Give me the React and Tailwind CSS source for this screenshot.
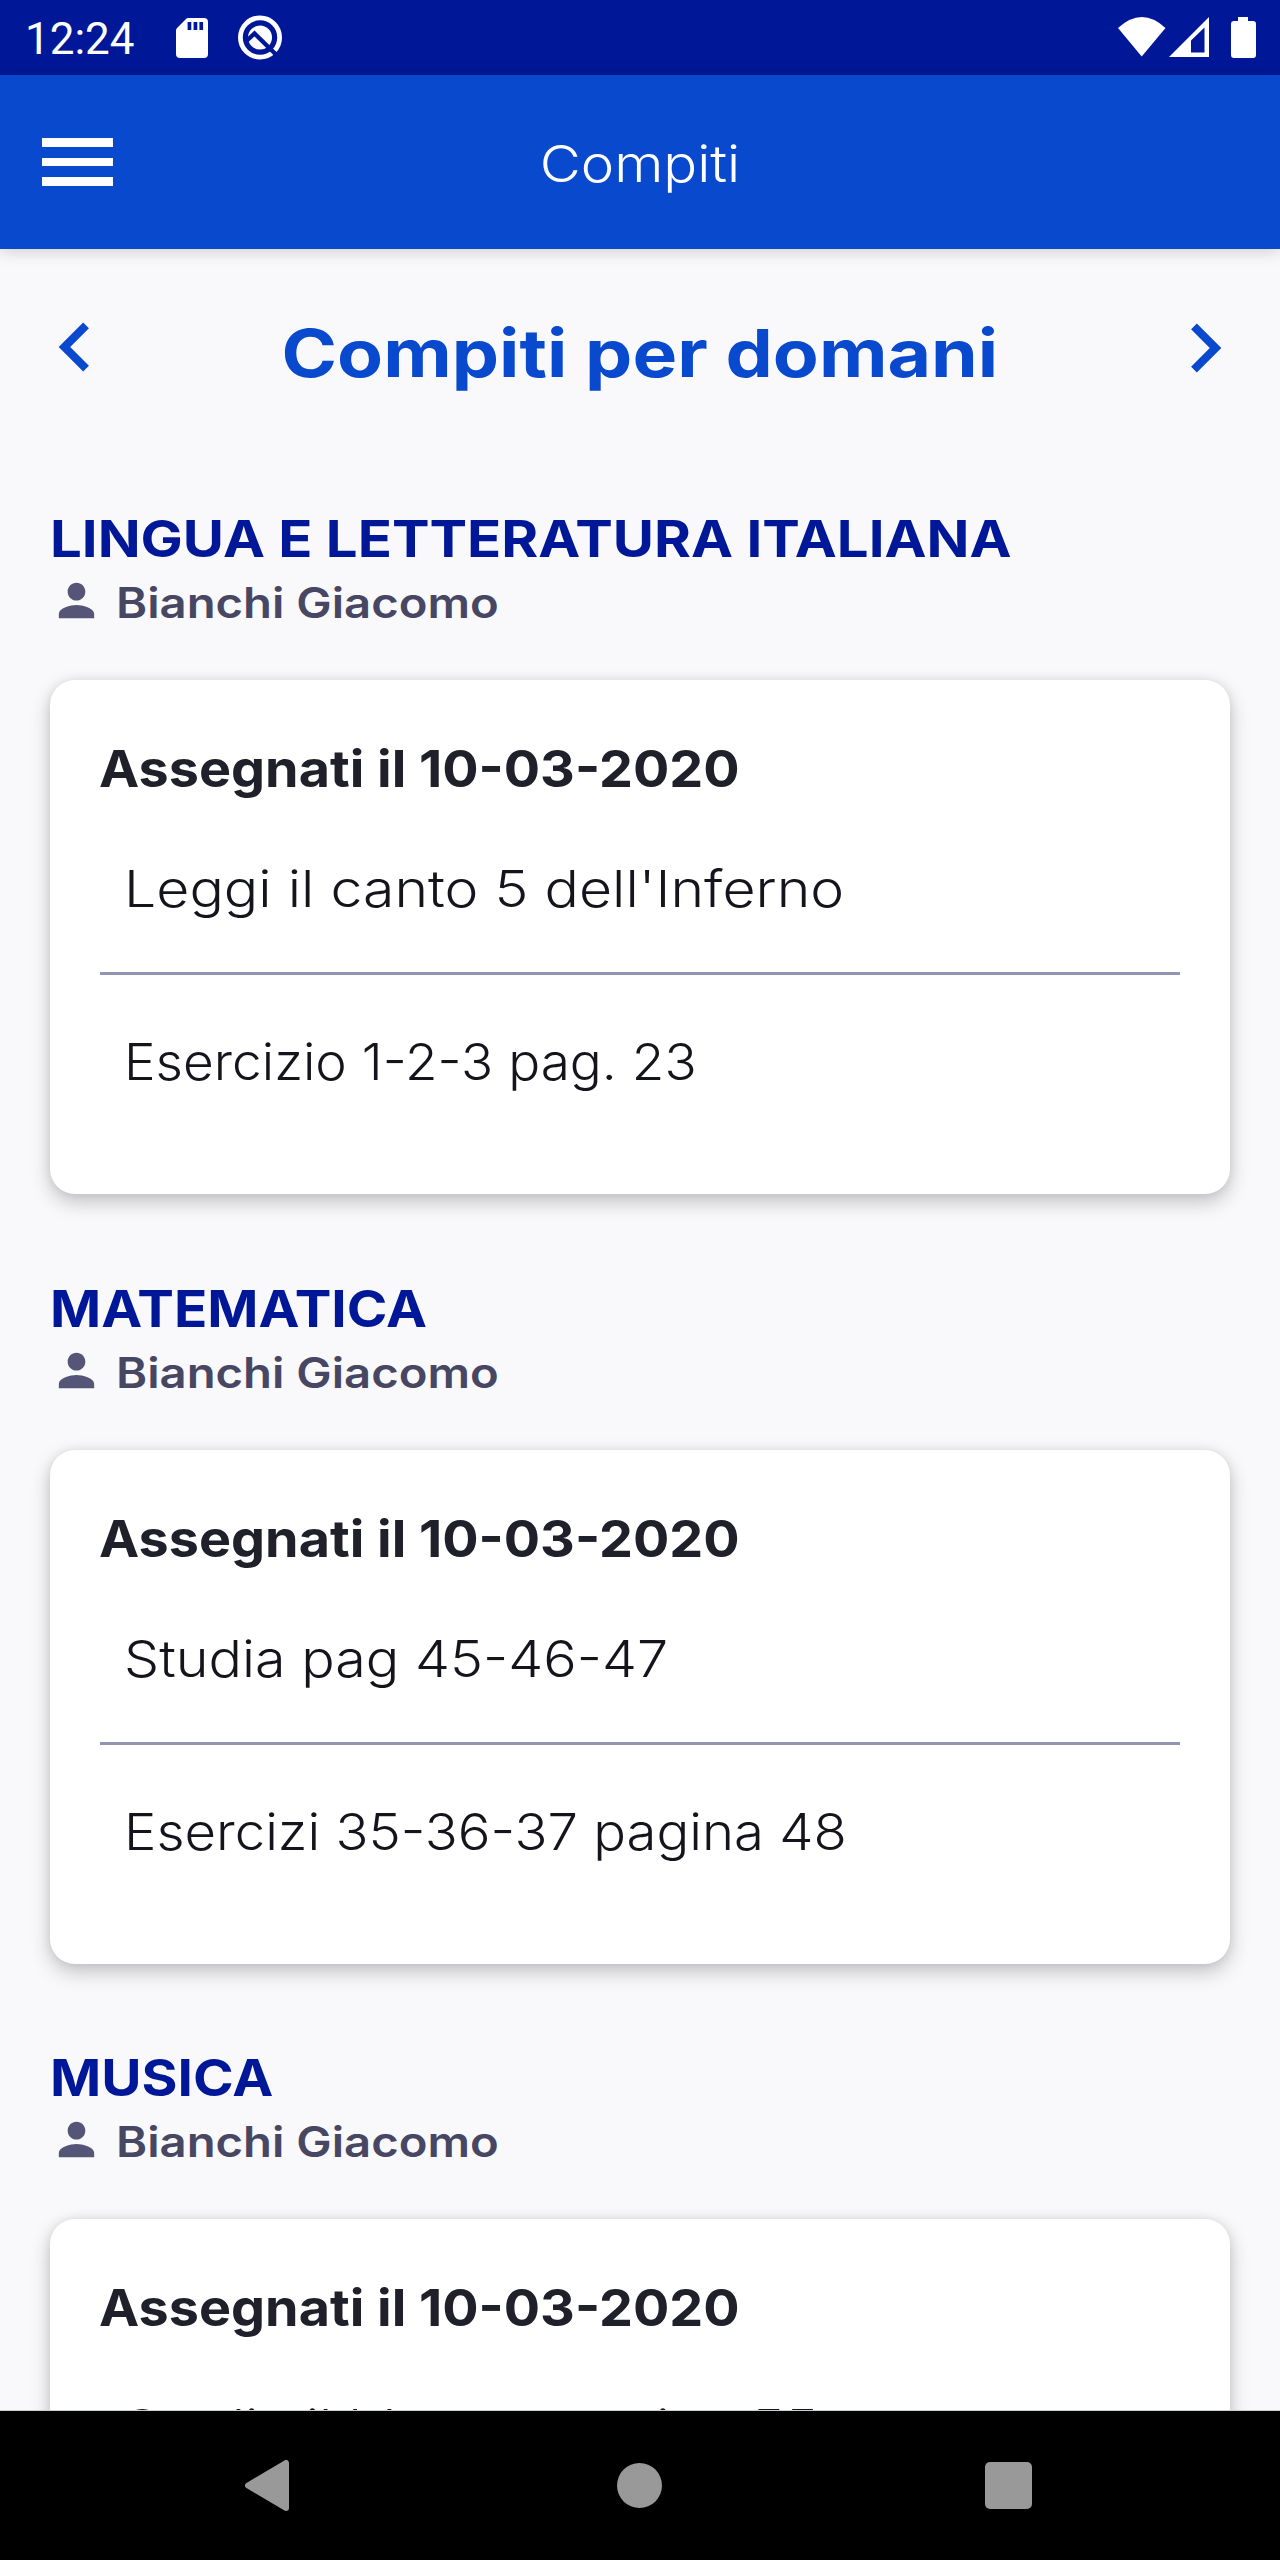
import React from 'react';
import { MdChevronLeft, MdChevronRight, MdPerson } from 'react-icons/md';

const subjects = [
  {
    name: 'LINGUA E LETTERATURA ITALIANA',
    nameClass: 'scale-x-[1.115]',
    teacher: 'Bianchi Giacomo',
    assigned: '10-03-2020',
    tasks: [
      { text: "Leggi il canto 5 dell'Inferno", className: 'scale-x-[1.132]' },
      { text: 'Esercizio 1-2-3 pag. 23', className: 'scale-x-[1.052]' },
    ],
  },
  {
    name: 'MATEMATICA',
    nameClass: 'scale-x-[1.088]',
    teacher: 'Bianchi Giacomo',
    assigned: '10-03-2020',
    tasks: [
      { text: 'Studia pag 45-46-47', className: 'scale-x-[1.102]' },
      { text: 'Esercizi 35-36-37 pagina 48', className: 'scale-x-[1.078]' },
    ],
  },
  {
    name: 'MUSICA',
    nameClass: 'scale-x-[1.09]',
    teacher: 'Bianchi Giacomo',
    assigned: '10-03-2020',
    tasks: [
      { text: 'Studia il blues a pagina 55', className: 'scale-x-[1.13]' },
    ],
  },
];

const StatusBar = () => (
  <div className="h-[75px] shrink-0 bg-[#001797] text-white flex items-start justify-between pl-[25px] pr-[24px]">
    <div className="flex items-start">
      <span className="w-[151px] mt-[14px] font-['Roboto',sans-serif] text-[44px] leading-[50px]">12:24</span>
      <svg className="mt-[18px]" width="32" height="40" viewBox="0 0 32 40">
        <path
          fill="currentColor"
          fillRule="evenodd"
          d="M11 0H28a4 4 0 0 1 4 4V36a4 4 0 0 1-4 4H4a4 4 0 0 1-4-4V12.5Q0 11 1 10L10 1Q11 0 12 0ZM11.6 4v8h3.7V4ZM17.6 4v8h3.7V4ZM23.4 4v8h3.7V4Z"
        />
      </svg>
      <svg className="mt-[15px] ml-[30px]" width="44" height="45" viewBox="-22 -22.5 44 45">
        <circle r="19.6" fill="none" stroke="currentColor" strokeWidth="4.8" />
        <circle r="12" fill="currentColor" />
        <path d="M-13 3L-5.5 -4L18 19" fill="none" stroke="#001797" strokeWidth="4.4" />
      </svg>
    </div>
    <div className="flex items-start pt-[17px]">
      <svg width="48" height="40" viewBox="0 0 48 40">
        <path fill="currentColor" d="M0 11Q24 -11 47.5 11L23.7 39.5Z" />
      </svg>
      <svg className="ml-[3px]" width="40" height="40" viewBox="0 0 40 40">
        <path fill="currentColor" fillRule="evenodd" d="M0 40L40 0V40ZM22 35.5H35.5V10.5L22 23.5Z" />
      </svg>
      <svg className="ml-[22px]" width="25" height="41" viewBox="0 0 25 41">
        <path fill="currentColor" d="M7 0H17V4H22a3 3 0 0 1 3 3V38a3 3 0 0 1-3 3H3a3 3 0 0 1-3-3V7a3 3 0 0 1 3-3H7Z" />
      </svg>
    </div>
  </div>
);

const Header = () => (
  <header className="relative z-10 h-[174px] shrink-0 bg-[#0849cd] text-white grid grid-cols-[71px_1fr_71px] items-center px-[42px] shadow-[0_2px_16px_rgba(0,0,0,0.18)]">
    <button className="flex flex-col gap-[11px]">
      <span className="h-[8.5px] bg-white" />
      <span className="h-[8.5px] bg-white" />
      <span className="h-[8.5px] bg-white" />
    </button>
    <h1 className="pt-[3px] text-center text-[50.5px] leading-[64px] font-light scale-x-[1.115]">Compiti</h1>
  </header>
);

const DayPicker = () => (
  <div className="flex items-start justify-between px-[26px] pt-[49px] text-[#0849cd]">
    <MdChevronLeft size={98} />
    <h2 className="mt-[15px] text-[66px] leading-[80px] font-bold scale-x-[1.138]">Compiti per domani</h2>
    <MdChevronRight size={98} className="mt-px" />
  </div>
);

const SubjectSection = ({ subject }) => (
  <section className="mb-[82.5px] whitespace-nowrap">
    <h3 className={`w-fit origin-left text-[50.5px] leading-[64px] font-bold text-[#001797] ${subject.nameClass}`}>
      {subject.name}
    </h3>
    <div className="mt-[6px] flex items-start h-[52px]">
      <MdPerson size={53} className="-mt-[3px] text-[#555577]" />
      <span className="ml-[13px] origin-left text-[42px] leading-[52px] font-semibold text-[#474763] scale-x-[1.125]">
        {subject.teacher}
      </span>
    </div>
    <div className="mt-[51px] h-[514px] rounded-[25px] bg-white px-[50px] pt-[57px] shadow-[0_8px_20px_rgba(0,0,0,0.22),0_0_10px_rgba(0,0,0,0.08)]">
      <h4 className="mb-[56px] -ml-px w-fit origin-left text-[50.5px] leading-[64px] font-bold text-[#20202a] scale-x-[1.067]">
        Assegnati il {subject.assigned}
      </h4>
      {subject.tasks.map((task, index) => (
        <div
          key={task.text}
          className={index > 0 ? 'mt-[51px] border-t-[3px] border-[#9393b4] pt-[55px]' : ''}
        >
          <p className={`ml-[24px] w-fit origin-left text-[50.5px] leading-[64px] font-light text-[#14141c] ${task.className}`}>
            {task.text}
          </p>
        </div>
      ))}
    </div>
  </section>
);

const NavigationBar = () => (
  <nav className="h-[150px] shrink-0 bg-black border-t border-[#c9d0d0] flex items-center pl-[245px] text-[#999999]">
    <svg width="44" height="51" viewBox="0 0 44 51">
      <path
        d="M41 3V48L3 25.5Z"
        fill="currentColor"
        stroke="currentColor"
        strokeWidth="6"
        strokeLinejoin="round"
      />
    </svg>
    <div className="ml-[328px] size-[45px] rounded-full bg-[#999999]" />
    <div className="ml-[323px] size-[47px] rounded-[5px] bg-[#999999]" />
  </nav>
);

const App = () => {
  return (
    <div className="w-[1280px] h-[2560px] flex flex-col overflow-hidden bg-[#f9f9fc] font-['Inter',sans-serif]">
      <StatusBar />
      <Header />
      <main className="flex-1 min-h-0 overflow-hidden">
        <DayPicker />
        <div className="mt-[110px] px-[50px]">
          {subjects.map(subject => (
            <SubjectSection key={subject.name} subject={subject} />
          ))}
        </div>
      </main>
      <NavigationBar />
    </div>
  );
};

export default App;
